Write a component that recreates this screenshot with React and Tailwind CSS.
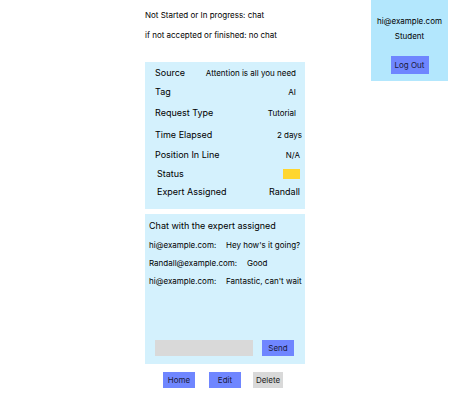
export default function App() {
  const font = { fontFamily: "Inter, 'Noto Sans', sans-serif" };
  return (
    <div className="relative w-[449px] h-[400px] bg-white text-black" style={font}>
      <div className="flex pl-[145px]">
        <div className="w-[160px] flex flex-col">
          <div className="h-[62px] text-[8px] leading-none">
            <div className="pt-[11px]">Not Started or In progress: chat</div>
            <div className="pt-[12px]">if not accepted or finished: no chat</div>
          </div>
          <div className="h-[147px] bg-[#d4f1fd] flex flex-col pt-[2px]">
            <div className="flex justify-between items-center h-[18px] pl-[10px] pr-[9px]">
              <span className="text-[9px]">Source</span>
              <span className="text-[8px]">Attention is all you need</span>
            </div>
            <div className="flex justify-between items-center h-[20px] pl-[10px] pr-[9px]">
              <span className="text-[9px]">Tag</span>
              <span className="text-[8px]">AI</span>
            </div>
            <div className="flex justify-between items-center h-[22px] pl-[10px] pr-[9px]">
              <span className="text-[9px]">Request Type</span>
              <span className="text-[8px]">Tutorial</span>
            </div>
            <div className="flex justify-between items-center h-[21px] pl-[10px] pr-[3px]">
              <span className="text-[9px]">Time Elapsed</span>
              <span className="text-[8px]">2 days</span>
            </div>
            <div className="flex justify-between items-center h-[19px] pl-[10px] pr-[5px]">
              <span className="text-[9px]">Position In Line</span>
              <span className="text-[8px]">N/A</span>
            </div>
            <div className="flex justify-between items-center h-[19px] pl-[12px] pr-[5px]">
              <span className="text-[9px]">Status</span>
              <span className="w-[17px] h-[10px] bg-[#ffd62e]"></span>
            </div>
            <div className="flex justify-between items-center h-[18px] pl-[12px] pr-[5px]">
              <span className="text-[9px]">Expert Assigned</span>
              <span className="text-[9px]">Randall</span>
            </div>
          </div>
          <div className="mt-[5px] h-[150px] bg-[#d4f1fd] flex flex-col pl-[4px]">
            <div className="text-[9px] leading-none pt-[7px]">Chat with the expert assigned</div>
            <div className="flex text-[8px] leading-none mt-[11px]">
              <span className="w-[77px]">hi@example.com:</span>
              <span>Hey how's it going?</span>
            </div>
            <div className="flex text-[8px] leading-none mt-[10px]">
              <span className="w-[98px]">Randall@example.com:</span>
              <span>Good</span>
            </div>
            <div className="flex text-[8px] leading-none mt-[10px]">
              <span className="w-[77px]">hi@example.com:</span>
              <span>Fantastic, can't wait</span>
            </div>
            <div className="flex-1"></div>
            <div className="flex items-center pl-[6px] pb-[8px]">
              <div className="w-[98px] h-[16px] bg-[#d9d9d9]"></div>
              <button className="ml-[9px] w-[32px] h-[16px] bg-[#6f86ff] text-[8px] text-[#1a1a3a]">Send</button>
            </div>
          </div>
          <div className="flex mt-[8px] pl-[18px] text-[8px]">
            <button className="w-[32px] h-[16px] bg-[#6f86ff] text-[#1a1a3a]">Home</button>
            <button className="ml-[14px] w-[32px] h-[16px] bg-[#6f86ff] text-[#1a1a3a]">Edit</button>
            <button className="ml-[12px] w-[30px] h-[16px] bg-[#d9d9d9] text-[#1a1a1a]">Delete</button>
          </div>
        </div>
        <div className="ml-[66px] w-[77px] h-[81px] bg-[#b3e7fd] flex flex-col items-center text-[8px] leading-none">
          <div className="pt-[17px]">hi@example.com</div>
          <div className="pt-[7px]">Student</div>
          <button className="mt-[16px] w-[38px] h-[18px] bg-[#6f86ff] text-[#1a1a3a] text-[8px]">Log Out</button>
        </div>
      </div>
    </div>
  );
}
